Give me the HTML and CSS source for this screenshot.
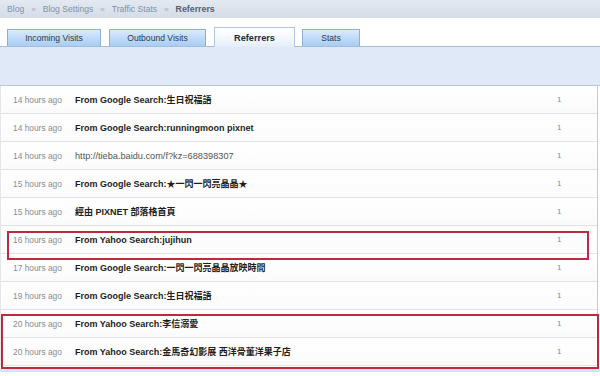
FILE: index.html
```html
<!DOCTYPE html>
<html lang="en">
<head>
  <meta charset="UTF-8" />
  <title>Referrers</title>
  <link rel="stylesheet" href="styles.css">
</head>
<body>
  <div class="crumbs">
    <span>Blog</span><span class="sep">»</span><span>Blog Settings</span><span class="sep">»</span><span>Traffic Stats</span><span class="sep">»</span><b>Referrers</b>
  </div>

  <div class="tabs">
    <div class="tab tab-in">Incoming Visits</div>
    <div class="tab tab-out">Outbound Visits</div>
    <div class="tab tab-ref active">Referrers</div>
    <div class="tab tab-stats">Stats</div>
  </div>

  <div class="band"></div>

  <div class="list">
    <div class="row"><span class="time">14 hours ago</span><span class="src">From Google Search:生日祝福語</span><span class="count">1</span></div>
    <div class="row"><span class="time">14 hours ago</span><span class="src">From Google Search:runningmoon pixnet</span><span class="count">1</span></div>
    <div class="row"><span class="time">14 hours ago</span><span class="src link">http://tieba.baidu.com/f?kz=688398307</span><span class="count">1</span></div>
    <div class="row"><span class="time">15 hours ago</span><span class="src">From Google Search:★一閃一閃亮晶晶★</span><span class="count">1</span></div>
    <div class="row"><span class="time">15 hours ago</span><span class="src">經由 PIXNET 部落格首頁</span><span class="count">1</span></div>
    <div class="row"><span class="time">16 hours ago</span><span class="src">From Yahoo Search:jujihun</span><span class="count">1</span></div>
    <div class="row"><span class="time">17 hours ago</span><span class="src">From Google Search:一閃一閃亮晶晶放映時間</span><span class="count">1</span></div>
    <div class="row"><span class="time">19 hours ago</span><span class="src">From Google Search:生日祝福語</span><span class="count">1</span></div>
    <div class="row"><span class="time">20 hours ago</span><span class="src">From Yahoo Search:李信溺愛</span><span class="count">1</span></div>
    <div class="row"><span class="time">20 hours ago</span><span class="src">From Yahoo Search:金馬奇幻影展 西洋骨董洋果子店</span><span class="count">1</span></div>
  </div>
  <div class="foot"></div>

  <!-- hand-drawn highlight boxes over the list -->
  <div class="mark mark-one"></div>
  <div class="mark mark-two"></div>
</body>
</html>
```

FILE: styles.css
```css
* {
  box-sizing: border-box;
  margin: 0;
  padding: 0;
}
body {
  background: #fff;
  font-family: "Liberation Sans", Arial, "Noto Sans CJK TC", sans-serif;
  width: 600px;
  height: 376px;
  overflow: hidden;
  position: relative;
}
.crumbs {
  height: 18px;
  line-height: 19px;
  padding-left: 7px;
  font-size: 8.6px;
  color: #8392a6;
  background: linear-gradient(#e3e9f1, #d4dce8);
}
.crumbs .sep {
  margin: 0 7px;
  color: #a3adba;
  font-size: 8px;
}
.crumbs b {
  color: #56606e;
  font-size: 8.8px;
}
.tabs {
  height: 29px;
  display: flex;
  align-items: flex-end;
  padding-left: 7px;
  border-bottom: 1px solid #a7bdd6;
}
.tab {
  height: 17px;
  line-height: 16px;
  text-align: center;
  font-size: 8.6px;
  color: #2c3a4c;
  background: linear-gradient(#dcebfc 0%, #c3dcf8 45%, #a9cdf4 100%);
  border: 1px solid #8eafd6;
  border-bottom: none;
  margin-right: 8px;
}
.tab-in { width: 94px; }
.tab-out { width: 97px; }
.tab-ref { width: 81px; margin-right: 7px; }
.tab-stats { width: 58px; }
.tab.active {
  height: 20px;
  line-height: 20px;
  margin-bottom: -1px;
  font-weight: bold;
  font-size: 9.2px;
  color: #222b36;
  background: linear-gradient(#ffffff 0%, #f5f9fe 50%, #e3edf9 100%);
  border-color: #b3c6dc;
}
.band {
  height: 39px;
  background: #dfe9f8;
  border-bottom: 1px solid #b8c8db;
}
.list {
  width: 598px;
  border-left: 1px solid #e6e6e6;
  border-right: 1px solid #c9c9c9;
}
.row {
  height: 28px;
  display: grid;
  grid-template-columns: 62px 1fr 40px;
  align-items: center;
  padding-left: 12px;
  border-bottom: 1px solid #e2e2e2;
  background: linear-gradient(#ffffff, #fbfbfb);
}
.time {
  font-size: 8.4px;
  color: #8c8c8c;
}
.src {
  font-size: 9px;
  font-weight: bold;
  color: #1e1e1e;
  white-space: nowrap;
}
.src.link {
  font-weight: normal;
  font-size: 9.2px;
  color: #555;
}
.count {
  font-size: 8px;
  color: #8a8a8a;
}
.foot {
  height: 3px;
  margin-top: 3px;
  background: #d6e2f1;
}
.mark {
  position: absolute;
  border: 2px solid #b92c3b;
}
.mark-one {
  left: 7px;
  top: 231px;
  width: 582px;
  height: 29px;
}
.mark-two {
  left: 1px;
  top: 314px;
  width: 598px;
  height: 55px;
}
```
